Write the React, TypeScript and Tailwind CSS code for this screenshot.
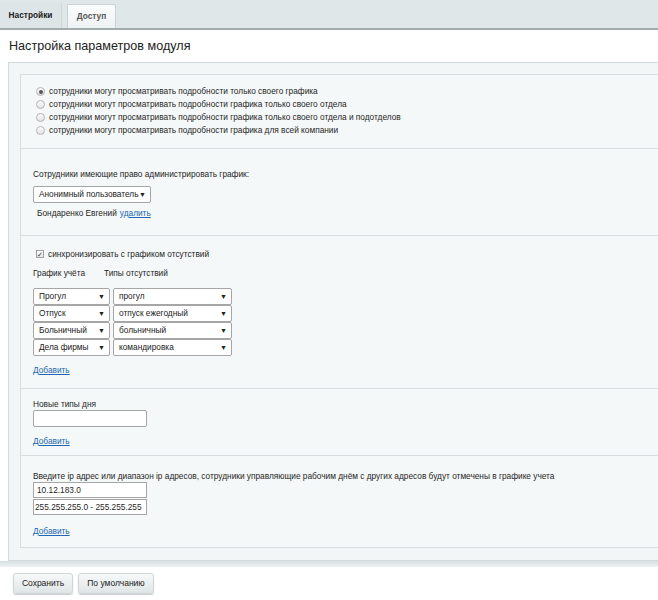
import React, { FC } from "react";

const font = { fontFamily: '"Liberation Sans", Arial, sans-serif' };

interface SelectProps {
  value: string;
  className?: string;
}

const FakeSelect: FC<SelectProps> = ({ value, className }) => (
  <div
    className={`flex items-center justify-between h-[17px] bg-white border border-[#a6a6a6] rounded-[2px] pl-[5px] pr-[4px] text-[8.3px] leading-none whitespace-nowrap text-[#222] ${className ?? ""}`}
  >
    <span>{value}</span>
    <span className="text-[7px] text-[#222]">▼</span>
  </div>
);

const Link: FC<{ children: React.ReactNode }> = ({ children }) => (
  <a className="text-[8.3px] text-[#2067b0] underline cursor-pointer">{children}</a>
);

const radios = [
  "сотрудники могут просматривать подробности только своего графика",
  "сотрудники могут просматривать подробности графика только своего отдела",
  "сотрудники могут просматривать подробности графика только своего отдела и подотделов",
  "сотрудники могут просматривать подробности графика для всей компании",
];

const absenceRows = [
  ["Прогул", "прогул"],
  ["Отпуск", "отпуск ежегодный"],
  ["Больничный", "больничный"],
  ["Дела фирмы", "командировка"],
];

const App: FC = () => {
  return (
    <div className="w-[658px] h-[600px] overflow-hidden bg-white text-[#1f1f1f] text-[8.3px] leading-none" style={font}>
      {/* tabs */}
      <div className="h-[30px] bg-[#e0e7e9] border-b-2 border-[#a3abad] flex items-end gap-[5px]">
        <div className="h-[25px] w-[62px] flex items-center justify-center font-bold text-[#222] bg-[#dde5e7] border-r border-[#cfd7d9]">
          Настройки
        </div>
        <div className="h-[24px] w-[49px] flex items-center justify-center font-bold text-[#555] bg-gradient-to-b from-[#fbfcfc] to-[#eef2f3] border border-b-0 border-[#cbd3d5] rounded-t-[2px]">
          Доступ
        </div>
      </div>

      <div className="h-[32px] flex items-center pl-[9px] text-[12.6px] text-[#222]">
        Настройка параметров модуля
      </div>

      {/* outer panel */}
      <div className="ml-[8px] bg-[#f2f6f6] border border-r-0 border-[#d3dbdd] pt-[11px] pb-[12px] pl-[11px]">
        <div className="bg-[#f5f8f8] border border-r-0 border-[#d6dee0]">
          <div className="pt-[10px] pb-[11px] pl-[15px] flex flex-col">
            {radios.map((r, i) => (
              <label key={r} className="flex items-center h-[13px] gap-[4px]">
                <span className="w-[9px] h-[9px] rounded-full border border-[#b3b3b3] bg-gradient-to-b from-[#fdfdfd] to-[#e3e3e3] flex items-center justify-center">
                  {i === 0 && <span className="w-[4px] h-[4px] rounded-full bg-[#555]" />}
                </span>
                <span>{r}</span>
              </label>
            ))}
          </div>

          <div className="border-t border-[#d6dee0] pt-[19px] pb-[16px] pl-[12px]">
            <div className="h-[12px] flex items-center">Сотрудники имеющие право администрировать график:</div>
            <FakeSelect value="Анонимный пользователь" className="mt-[6px] w-[118px]" />
            <div className="h-[12px] flex items-center mt-[4px] pl-[4px] gap-[3px]">
              Бондаренко Евгений <Link>удалить</Link>
            </div>
          </div>

          <div className="border-t border-[#d6dee0] pt-[12px] pb-[12px] pl-[12px]">
            <label className="flex items-center gap-[4px] pl-[3px] h-[12px]">
              <span className="w-[8px] h-[8px] border border-[#a0a0a0] bg-gradient-to-b from-white to-[#e8e8e8] flex items-center justify-center text-[7px] leading-none text-[#333]">
                ✓
              </span>
              синхронизировать с графиком отсутствий
            </label>
            <div className="flex h-[12px] items-center mt-[7px]">
              <span className="w-[71px]">График учёта</span>
              <span>Типы отсутствий</span>
            </div>
            <div className="flex flex-col mt-[9px]">
              {absenceRows.map(([a, b]) => (
                <div key={a} className="flex gap-[3px] h-[17px]">
                  <FakeSelect value={a} className="w-[77px]" />
                  <FakeSelect value={b} className="w-[119px]" />
                </div>
              ))}
            </div>
            <div className="mt-[8px] h-[12px] flex items-center">
              <Link>Добавить</Link>
            </div>
          </div>

          <div className="border-t border-[#d6dee0] pt-[10px] pb-[8px] pl-[12px]">
            <div className="h-[11px] flex items-center">Новые типы дня</div>
            <div className="w-[114px] h-[17px] bg-white border border-[#a6a6a6] rounded-[2px]" />
            <div className="mt-[8px] h-[12px] flex items-center">
              <Link>Добавить</Link>
            </div>
          </div>

          <div className="border-t border-[#d6dee0] pt-[14px] pb-[10px] pl-[12px]">
            <div className="h-[12px] flex items-center whitespace-nowrap">
              Введите ip адрес или диапазон ip адресов, сотрудники управляющие рабочим днём с других адресов будут отмечены в графике учета
            </div>
            <div className="flex flex-col gap-[1px]">
              <div className="w-[114px] h-[16px] bg-white border border-[#a6a6a6] flex items-center pl-[3px] whitespace-nowrap overflow-hidden">
                10.12.183.0
              </div>
              <div className="w-[114px] h-[16px] bg-white border border-[#a6a6a6] flex items-center pl-[1px] whitespace-nowrap overflow-hidden">
                255.255.255.0 - 255.255.255
              </div>
            </div>
            <div className="mt-[10px] h-[12px] flex items-center">
              <Link>Добавить</Link>
            </div>
          </div>
        </div>
      </div>

      {/* bottom strip */}
      <div className="h-[6px] bg-gradient-to-b from-[#d7dfe1] to-[#eef2f3]" />

      <div className="flex gap-[5px] pl-[13px] pt-[6px]">
        <button className="h-[21px] w-[60px] rounded-[3px] bg-gradient-to-b from-[#f7f9f9] to-[#dfe5e6] border border-[#d0d6d8] shadow-[0_1px_1px_rgba(0,0,0,0.2)] text-[8.5px] text-[#222]">
          Сохранить
        </button>
        <button className="h-[21px] w-[76px] rounded-[3px] bg-gradient-to-b from-[#f7f9f9] to-[#dfe5e6] border border-[#d0d6d8] shadow-[0_1px_1px_rgba(0,0,0,0.2)] text-[8.5px] text-[#222]">
          По умолчанию
        </button>
      </div>
    </div>
  );
};

export default App;
